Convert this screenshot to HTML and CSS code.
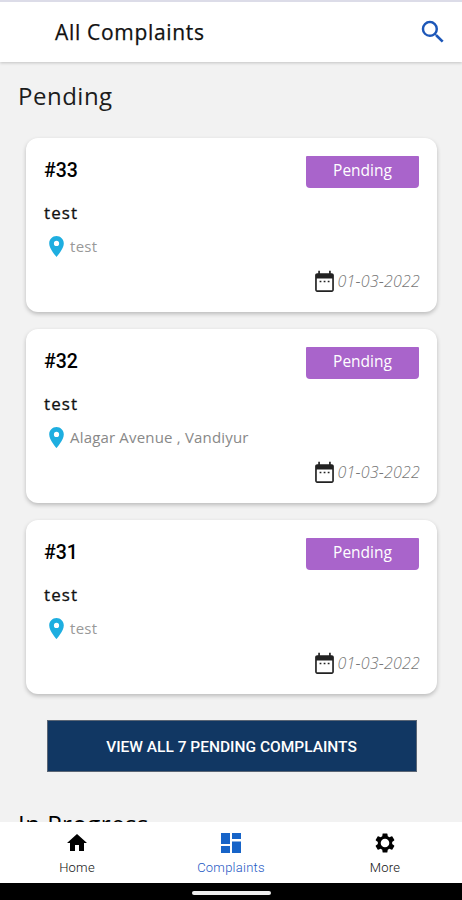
FILE: index.html
```html
<!DOCTYPE html>
<html lang="en">
<head>
<meta charset="utf-8">
<title>All Complaints</title>
<link rel="stylesheet" href="styles.css">
</head>
<body>
<svg width="0" height="0" class="sprite" aria-hidden="true">
  <symbol id="pin" viewBox="0 0 24 24"><path d="M12 2C8.13 2 5 5.13 5 9c0 5.25 7 13 7 13s7-7.75 7-13c0-3.87-3.13-7-7-7zm0 9.500a2.500 2.500 0 1 1 0-5 2.500 2.500 0 0 1 0 5z"/></symbol>
  <symbol id="calendar" viewBox="0 0 24 24"><path d="M9 11.300H7.300v1.500H9zm3.900 0h-1.700v1.500h1.700zm3.900 0h-1.700v1.500h1.700zM19 4h-1V1.700h-1.600V4H7.600V1.700H6V4H5c-1.110 0-2 .9-2 2v14c0 1.100.89 2 2 2h14c1.100 0 2-.9 2-2V6c0-1.100-.9-2-2-2zm.4 16.500H4.600V9h14.800z"/></symbol>
</svg>
<div class="screen">
  <header class="topbar">
    <h1 class="title">All Complaints</h1>
    <svg class="search" viewBox="0 0 24 24"><path d="M15.500 14h-.79l-.28-.27A6.470 6.470 0 0 0 16 9.500 6.500 6.500 0 1 0 9.500 16c1.610 0 3.090-.59 4.230-1.570l.27.28v.79l5 4.990L20.490 19l-4.990-5zm-6 0C7.010 14 5 11.990 5 9.500S7.010 5 9.500 5 14 7.010 14 9.500 11.990 14 9.500 14z"/></svg>
  </header>
  <main class="content">
    <h2 class="section">Pending</h2>
    <div class="cards">
      <article class="card">
        <div class="head"><span class="num">#33</span><span class="badge">Pending</span></div>
        <p class="subject">test</p>
        <p class="place"><svg class="pin"><use href="#pin"/></svg><span class="word">test</span></p>
        <p class="date"><svg class="calendar"><use href="#calendar"/></svg><span>01-03-2022</span></p>
      </article>
      <article class="card">
        <div class="head"><span class="num">#32</span><span class="badge">Pending</span></div>
        <p class="subject">test</p>
        <p class="place"><svg class="pin"><use href="#pin"/></svg><span>Alagar Avenue , Vandiyur</span></p>
        <p class="date"><svg class="calendar"><use href="#calendar"/></svg><span>01-03-2022</span></p>
      </article>
      <article class="card">
        <div class="head"><span class="num">#31</span><span class="badge">Pending</span></div>
        <p class="subject">test</p>
        <p class="place"><svg class="pin"><use href="#pin"/></svg><span class="word">test</span></p>
        <p class="date"><svg class="calendar"><use href="#calendar"/></svg><span>01-03-2022</span></p>
      </article>
    </div>
    <button class="view-all"><span>VIEW ALL 7 PENDING COMPLAINTS</span></button>
    <h2 class="section next">In Progress</h2>
  </main>
  <nav class="tabs">
    <a class="tab"><svg viewBox="0 0 24 24"><path d="M10 20v-6h4v6h5v-8h3L12 3 2 12h3v8z"/></svg><span>Home</span></a>
    <a class="tab active"><svg viewBox="0 0 24 24"><path d="M2 2h9v11H2zM13 2h9v6h-9zM2 15h9v7H2zM13 10.500h9V22h-9z"/></svg><span>Complaints</span></a>
    <a class="tab"><svg viewBox="0 0 24 24"><path d="M19.140 12.940c.04-.3.06-.61.06-.94 0-.32-.02-.64-.07-.94l2.030-1.580a.49.49 0 0 0 .12-.61l-1.920-3.320a.488.488 0 0 0-.59-.22l-2.390.96c-.5-.38-1.030-.7-1.620-.94l-.36-2.540a.484.484 0 0 0-.48-.41h-3.840c-.24 0-.43.17-.47.41l-.36 2.540c-.59.24-1.130.57-1.620.94l-2.390-.96c-.22-.08-.47 0-.59.22L2.740 8.870c-.12.21-.08.47.12.61l2.030 1.580c-.05.3-.09.63-.09.94s.02.64.07.94l-2.030 1.580a.49.49 0 0 0-.12.61l1.920 3.320c.12.22.37.29.59.22l2.390-.96c.5.38 1.030.7 1.620.94l.36 2.540c.05.24.24.41.48.41h3.840c.24 0 .44-.17.47-.41l.36-2.540c.59-.24 1.130-.56 1.620-.94l2.390.96c.22.08.47 0 .59-.22l1.920-3.320c.12-.22.07-.47-.12-.61l-2.010-1.580zM12 16.300a4.300 4.300 0 1 1 0-8.600 4.300 4.300 0 0 1 0 8.600z"/></svg><span>More</span></a>
  </nav>
  <div class="system"><span class="handle"></span></div>
</div>
</body>
</html>
```

FILE: styles.css
```css
* { box-sizing: border-box; }
body, h1, h2, p { margin: 0; }
body { font-family: "Open Sans", "Noto Sans", sans-serif; background: #f2f2f2; color: #111; }
.sprite { display: none; }
.screen { width: 462px; height: 900px; display: flex; flex-direction: column; overflow: hidden; }

.topbar {
  flex: 0 0 62px; display: flex; align-items: center; justify-content: space-between;
  padding: 0 17.5px 0 55px; background: #fff; border-top: 2px solid #dcdce8;
  box-shadow: 0 1px 3px rgba(0, 0, 0, .2); z-index: 1;
}
.title { font-size: 21px; line-height: 28px; font-weight: 400; letter-spacing: .68px; color: #111; -webkit-text-stroke: .25px #111; }
.search { width: 30px; height: 30px; margin-right: -3px; margin-top: -1px; fill: #1d57b8; }

.content { flex: 1; min-height: 0; overflow: hidden; }
.section { margin: 17px 0 0 18px; font-size: 24px; line-height: 34px; font-weight: 400; letter-spacing: .5px; color: #1c1c1c; }
.cards { display: flex; flex-direction: column; gap: 17.5px; margin: 25px 25px 0 26px; }
.card { height: 173.5px; padding: 18px 18px 0; border-radius: 12px; background: #fff; box-shadow: 0 2px 4px rgba(0, 0, 0, .23); }
.head { display: flex; justify-content: space-between; height: 32px; }
.num { font: 500 19.5px/30px Roboto, sans-serif; color: #000; }
.badge { width: 113px; height: 32px; border-radius: 1px 1px 4px 4px; background: #a964cb; color: #fff; text-align: center; font-size: 15.5px; line-height: 29px; }
.subject { margin-top: 13px; font-size: 17px; line-height: 24px; font-weight: 500; letter-spacing: 1.1px; color: #111; -webkit-text-stroke: .3px #111; }
.place { display: flex; align-items: center; gap: 1px; height: 24px; margin-top: 9px; font-size: 15px; letter-spacing: .18px; color: #888; }
.pin { width: 25px; height: 25px; fill: #1eaee0; }
.place span { line-height: 22px; }
.place .word { letter-spacing: .3px; color: #999; }
.date { display: flex; align-items: center; justify-content: flex-end; gap: 1px; height: 24px; margin-top: 11px; margin-right: -1px; font-size: 16px; letter-spacing: .2px; font-style: italic; font-weight: 300; color: #777; }
.calendar { width: 25px; height: 25px; fill: #222; }
.view-all {
  display: flex; align-items: center; justify-content: center; width: 370px; height: 52px; margin: 26.5px 0 0 46.5px; padding: 1px 0 0;
  border: 1px solid #5b6675; background: #113763; color: #fff; font: 500 15.500px/20px Roboto, sans-serif;
}
.next { margin-top: 35px; color: #000; }

.tabs { flex: 0 0 61px; display: grid; grid-template-columns: repeat(3, 1fr); background: #fff; }
.tab { display: flex; flex-direction: column; align-items: center; padding-top: 9px; font: 300 13px/16px Roboto, sans-serif; letter-spacing: .25px; color: #111; fill: #000; }
.tab svg { width: 24px; height: 24px; margin-bottom: 5px; }
.active { color: #2559c4; fill: #1764c8; }
.system { flex: 0 0 17px; display: flex; justify-content: center; padding-top: 8px; background: #000; }
.handle { width: 79px; height: 4px; border-radius: 2px; background: #eee; }
```
